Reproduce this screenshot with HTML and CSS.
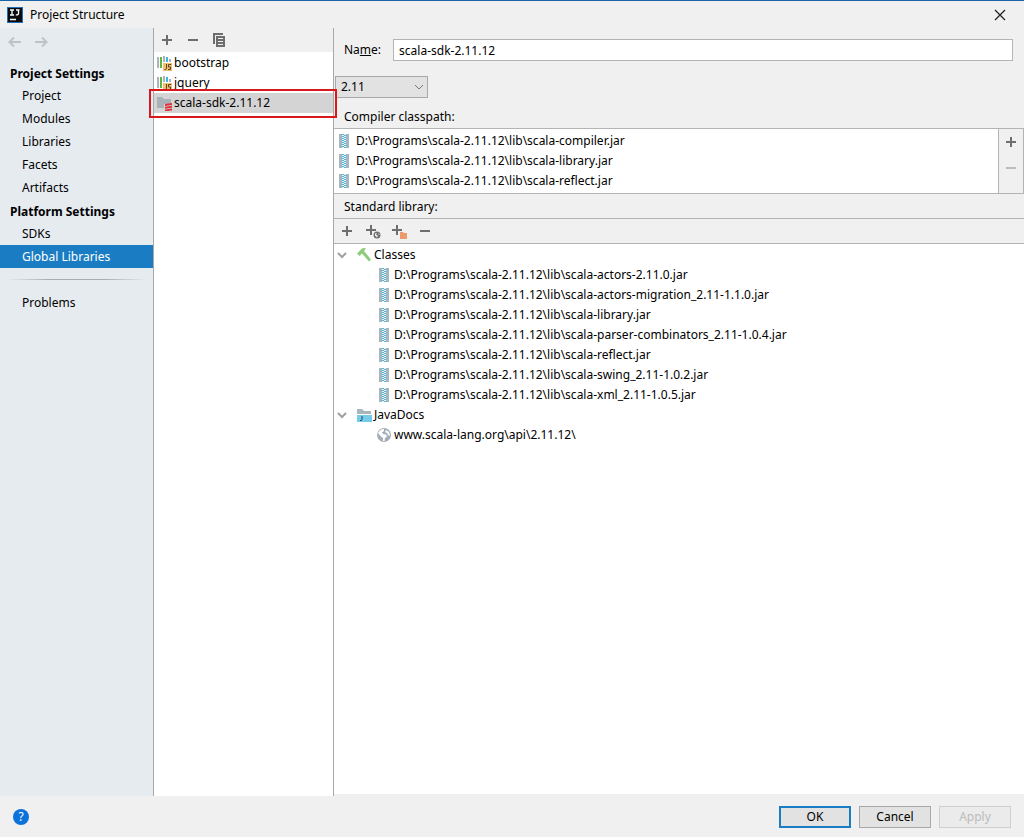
FILE: index.html
```html
<!DOCTYPE html>
<html lang="en">
<head>
    <meta charset="UTF-8">
    <meta name="viewport" content="width=device-width, initial-scale=1.0">
    <title>Project Structure</title>
    <link rel="stylesheet" href="styles.css">
</head>
<body>

    <!-- Shared icons -->
    <svg class="sprite" aria-hidden="true">
        <symbol id="plus" viewBox="0 0 16 16"><path d="M7 3h2v4h4v2H9v4H7V9H3V7h4z" fill="#6e6e6e"/></symbol>
        <symbol id="minus" viewBox="0 0 16 16"><path d="M3 7h10v2H3z" fill="currentColor"/></symbol>
        <symbol id="jar" viewBox="0 0 16 16">
            <path d="M3 1h3v14H3zM10 1h3v14h-3z" fill="#a9b5bd"/>
            <path d="M6 1h4v14H6z" fill="#e4f4fa"/>
            <path d="M6 1h2v1H6zM8 2h2v1H8zM6 3h2v1H6zM8 4h2v1H8zM6 5h2v1H6zM8 6h2v1H8zM6 7h2v1H6zM8 8h2v1H8zM6 9h2v1H6zM8 10h2v1H8zM6 11h2v1H6zM8 12h2v1H8zM6 13h2v1H6zM8 14h2v1H8z" fill="#52b5d6"/>
        </symbol>
        <symbol id="jslib" viewBox="0 0 16 16">
            <path d="M1 2h2v11H1zM7 1h2v6H7zM13 4h2v3h-2z" fill="#a9b5bd"/>
            <path d="M4 2h2v11H4z" fill="#62b543"/>
            <path d="M10 2h2v5h-2z" fill="#40b6e0"/>
            <path d="M7 8h9v8H7z" fill="#f0c070"/>
            <path d="M10.500 9v4.500q0 1-2 1M15 9.500h-2.500v2.500h2v2.500H12" fill="none" stroke="#5c4420"/>
        </symbol>
        <symbol id="scala" viewBox="0 0 16 16">
            <path d="M1 2h5l2 2h7v5H8v4H1z" fill="#a9b2b9"/>
            <path d="M9 9l7-1v2l-7 1zM9 11.700l7-1v2l-7 1zM9 14.400l7-1v2l-7 1z" fill="#e0343c"/>
        </symbol>
        <symbol id="chevron" viewBox="0 0 16 16"><path d="M4 6l4 4 4-4" fill="none" stroke="#a0a0a0" stroke-width="2"/></symbol>
        <symbol id="hammer" viewBox="0 0 16 16">
            <path d="M1 6.500L6 1.500q2-.8 4 0L8 4l7 8.500-2 2L6 6.500 3.500 9z" fill="#8fcb7c"/>
        </symbol>
        <symbol id="docs" viewBox="0 0 16 16">
            <path d="M1 2h5l2 2h7v3H1z" fill="#a9b5bd"/>
            <path d="M1 8h15v7H1z" fill="#74cbea"/>
            <path d="M6 9v3.500q0 1.300-2 1" fill="none" stroke="#234b5b"/>
        </symbol>
        <symbol id="globe" viewBox="0 0 16 16">
            <circle cx="8" cy="8" r="7" fill="#a3b0ba"/>
            <path d="M3 4.500l2-2 3-.5v2L6 5.500 7 7l3 .5 1 2-2 1.500-.5 3H7v-3L5 9.500 2 6zM10 3l3 2 1 4-2-1-1-2-2-1z" fill="#fff"/>
        </symbol>
    </svg>

    <header class="titlebar">
        <svg class="app-logo" viewBox="0 0 16 16" aria-hidden="true">
            <path d="M0 0h16v16H0z" fill="#246db0"/>
            <path d="M1 1h14v14H1z" fill="#0b0d12"/>
            <path d="M3 3h4M3 8h4M5 3v5M9 3h3.500M11.500 3v3.500q0 1.700-2.700 1.300M3 12.500h6" fill="none" stroke="#fff" stroke-width="1.300"/>
        </svg>
        <h1>Project Structure</h1>
        <button class="close" aria-label="Close">
            <svg viewBox="0 0 12 12"><path d="M1 1l10 10M11 1L1 11" stroke="#222" stroke-width="1.300"/></svg>
        </button>
    </header>

    <main class="content">
        <nav class="sidebar">
            <div class="history">
                <button aria-label="Back" disabled><svg viewBox="0 0 16 16"><path d="M14 8H2M7 3.500L2.500 8 7 12.500" fill="none" stroke="#c0c3c6" stroke-width="2"/></svg></button>
                <button aria-label="Forward" disabled><svg viewBox="0 0 16 16"><path d="M2 8h12M9 3.500L13.500 8 9 12.500" fill="none" stroke="#c0c3c6" stroke-width="2"/></svg></button>
            </div>
            <h2>Project Settings</h2>
            <a href="#">Project</a>
            <a href="#">Modules</a>
            <a href="#">Libraries</a>
            <a href="#">Facets</a>
            <a href="#">Artifacts</a>
            <h2>Platform Settings</h2>
            <a href="#">SDKs</a>
            <a href="#" class="active">Global Libraries</a>
            <hr>
            <a href="#">Problems</a>
        </nav>

        <section class="libraries">
            <div class="toolbar">
                <button aria-label="Add library"><svg class="icon"><use href="#plus"/></svg></button>
                <button aria-label="Remove library"><svg class="icon"><use href="#minus"/></svg></button>
                <button aria-label="Copy library"><svg class="icon" viewBox="0 0 16 16"><path d="M2 1h10v2H4v9H2z" fill="#6e6e6e"/><path d="M5 4h9v11H5zM7 6v1h5V6zM7 9v1h5V9zM7 12v1h5v-1z" fill="#6e6e6e" fill-rule="evenodd"/></svg></button>
            </div>
            <ul class="library-list">
                <li><svg class="icon"><use href="#jslib"/></svg>bootstrap</li>
                <li><svg class="icon"><use href="#jslib"/></svg>jquery</li>
                <li class="selected"><svg class="icon"><use href="#scala"/></svg>scala-sdk-2.11.12</li>
            </ul>
        </section>

        <section class="details">
            <div class="name-row">
                <label for="name">Na<u>m</u>e:</label>
                <input type="text" id="name" value="scala-sdk-2.11.12">
            </div>
            <div class="version">
                <select aria-label="Scala version"><option>2.11</option></select>
                <svg class="select-arrow" viewBox="0 0 10 10" aria-hidden="true"><path d="M1 3l4 4 4-4" fill="none" stroke="#777"/></svg>
            </div>

            <h3>Compiler classpath:</h3>
            <div class="classpath">
                <ul>
                    <li><svg class="icon"><use href="#jar"/></svg>D:\Programs\scala-2.11.12\lib\scala-compiler.jar</li>
                    <li><svg class="icon"><use href="#jar"/></svg>D:\Programs\scala-2.11.12\lib\scala-library.jar</li>
                    <li><svg class="icon"><use href="#jar"/></svg>D:\Programs\scala-2.11.12\lib\scala-reflect.jar</li>
                </ul>
                <div class="classpath-tools">
                    <button aria-label="Add to classpath"><svg class="icon"><use href="#plus"/></svg></button>
                    <button aria-label="Remove from classpath" disabled><svg class="icon"><use href="#minus"/></svg></button>
                </div>
            </div>

            <h3>Standard library:</h3>
            <div class="toolbar standard-tools">
                <button aria-label="Add"><svg class="icon"><use href="#plus"/></svg></button>
                <button aria-label="Add from URL"><svg class="icon" viewBox="0 0 16 16"><path d="M5 2h2v4h4v2H7v4H5V8H1V6h4z" fill="#6e6e6e"/><circle cx="12" cy="12" r="3.500" fill="#6e6e6e"/><path d="M10 10.500l2-.5-1 1.500 2 1.500-1 1.500-2-2zM13 10l1 2 1-.5z" fill="#f2f2f2"/></svg></button>
                <button aria-label="Add folder"><svg class="icon" viewBox="0 0 16 16"><path d="M5 2h2v4h4v2H7v4H5V8H1V6h4z" fill="#6e6e6e"/><path d="M8 9h3l1 1h4v6H8z" fill="#f2f2f2"/><path d="M9 9h3l1 1h3v6H9z" fill="#ec9a6c"/></svg></button>
                <button aria-label="Remove"><svg class="icon"><use href="#minus"/></svg></button>
            </div>
            <ul class="tree">
                <li>
                    <div class="branch"><svg class="icon"><use href="#chevron"/></svg><svg class="icon"><use href="#hammer"/></svg>Classes</div>
                    <ul>
                        <li><svg class="icon"><use href="#jar"/></svg>D:\Programs\scala-2.11.12\lib\scala-actors-2.11.0.jar</li>
                        <li><svg class="icon"><use href="#jar"/></svg>D:\Programs\scala-2.11.12\lib\scala-actors-migration_2.11-1.1.0.jar</li>
                        <li><svg class="icon"><use href="#jar"/></svg>D:\Programs\scala-2.11.12\lib\scala-library.jar</li>
                        <li><svg class="icon"><use href="#jar"/></svg>D:\Programs\scala-2.11.12\lib\scala-parser-combinators_2.11-1.0.4.jar</li>
                        <li><svg class="icon"><use href="#jar"/></svg>D:\Programs\scala-2.11.12\lib\scala-reflect.jar</li>
                        <li><svg class="icon"><use href="#jar"/></svg>D:\Programs\scala-2.11.12\lib\scala-swing_2.11-1.0.2.jar</li>
                        <li><svg class="icon"><use href="#jar"/></svg>D:\Programs\scala-2.11.12\lib\scala-xml_2.11-1.0.5.jar</li>
                    </ul>
                </li>
                <li>
                    <div class="branch"><svg class="icon"><use href="#chevron"/></svg><svg class="icon"><use href="#docs"/></svg>JavaDocs</div>
                    <ul>
                        <li><svg class="icon"><use href="#globe"/></svg>www.scala-lang.org\api\2.11.12\</li>
                    </ul>
                </li>
            </ul>
        </section>
    </main>

    <footer class="buttons">
        <button class="help" aria-label="Help">?</button>
        <button class="btn primary">OK</button>
        <button class="btn">Cancel</button>
        <button class="btn" disabled>Apply</button>
    </footer>

</body>
</html>
```
FILE: styles.css
```css
* {
    box-sizing: border-box;
}

body {
    display: flex;
    flex-direction: column;
    min-height: 100vh;
    margin: 0;
    border-top: 1px solid #1a64a8;
    background-color: #f0f0f0;
    color: #000;
    font-family: "Noto Sans", "Open Sans", sans-serif;
    font-size: 12px;
    line-height: 20px;
}

h1, h2, h3, ul {
    margin: 0;
    padding: 0;
    font-size: 12px;
    font-weight: normal;
    list-style: none;
}

button, input, select {
    font: inherit;
    color: inherit;
}

button {
    padding: 0;
    border: none;
    background: none;
}

.sprite {
    display: none;
}

.icon {
    flex: none;
    display: block;
    width: 16px;
    height: 16px;
    color: #6e6e6e;
}

/* Title bar */
.titlebar {
    display: flex;
    align-items: center;
    gap: 7px;
    height: 27px;
    padding: 0 18px 0 7px;
}

.app-logo {
    width: 16px;
    height: 16px;
}

.close {
    width: 12px;
    height: 12px;
    margin-left: auto;
}

.close svg {
    display: block;
}

/* Main area */
.content {
    flex: 1;
    display: grid;
    grid-template-columns: 154px 180px 1fr;
}

.sidebar {
    border-right: 1px solid #a8a8a8;
    background-color: #e6ebf0;
    line-height: 23px;
}

.history {
    display: flex;
    gap: 10px;
    height: 33px;
    padding: 6px 7px;
}

.history button,
.history svg {
    display: block;
    width: 16px;
    height: 16px;
}

.sidebar h2 {
    height: 23px;
    padding: 1px 0 0 10px;
    font-weight: bold;
}

.sidebar a {
    display: block;
    padding-left: 22px;
    color: inherit;
    text-decoration: none;
}

.sidebar a.active {
    background-color: #1a7dc4;
    color: #fff;
}

.sidebar hr {
    height: 1px;
    margin: 11px 7px;
    border: none;
    background: linear-gradient(to right, transparent, #a9adb1 30%, #a9adb1 70%, transparent);
}

.toolbar {
    display: flex;
    align-items: center;
    gap: 10px;
    height: 24px;
    padding-left: 5px;
}

/* Library list */
.libraries {
    display: flex;
    flex-direction: column;
    border-right: 1px solid #a8a8a8;
}

.library-list {
    flex: 1;
    padding-top: 1px;
    background-color: #fff;
}

.library-list li {
    display: flex;
    align-items: center;
    gap: 2px;
    padding-left: 2px;
}

.library-list .selected {
    position: relative;
    background-color: #d4d4d4;
}

/* Red frame around the selected library */
.library-list .selected::after {
    content: "";
    position: absolute;
    z-index: 1;
    inset: -4px -4px -5px -5px;
    border: 2px solid #d8181c;
}

/* Library details */
.details {
    display: flex;
    flex-direction: column;
    min-width: 0;
}

.name-row {
    display: flex;
    align-items: center;
    gap: 12px;
    padding: 11px 11px 15px 10px;
}

.name-row input {
    flex: 1;
    height: 22px;
    padding: 0 5px;
    border: 1px solid #b4b4b4;
    background-color: #fff;
}

.version {
    position: relative;
    width: 94px;
    margin-bottom: 9px;
    padding-left: 1px;
}

.version select {
    display: block;
    appearance: none;
    width: 100%;
    height: 22px;
    padding: 0 5px;
    border: 1px solid #a8a8a8;
    border-radius: 0;
    background-color: #e2e2e2;
}

.select-arrow {
    position: absolute;
    top: 6px;
    right: 4px;
    width: 10px;
    height: 10px;
}

.details h3 {
    padding-left: 10px;
}

.classpath {
    display: flex;
    margin: 1px 0 3px;
    border: 1px solid #b4b4b4;
    border-left: none;
}

.classpath ul {
    flex: 1;
    padding: 2px 0;
    background-color: #fff;
}

.classpath li {
    display: flex;
    align-items: center;
    gap: 4px;
    padding-left: 2px;
}

.classpath-tools {
    display: flex;
    flex-direction: column;
    gap: 10px;
    padding: 5px 4px;
    border-left: 1px solid #b4b4b4;
}

button:disabled .icon {
    color: #bdbdbd;
}

.standard-tools {
    height: 26px;
    margin-top: 1px;
    border-top: 1px solid #b4b4b4;
    border-bottom: 1px solid #b4b4b4;
}

.tree {
    flex: 1;
    margin-bottom: 2px;
    padding-top: 1px;
    background-color: #fff;
}

.branch {
    display: flex;
    align-items: center;
    gap: 2px;
}

.branch .icon:first-child {
    margin-right: 4px;
}

.tree ul li {
    display: flex;
    align-items: center;
    gap: 2px;
    padding-left: 42px;
}

/* Footer buttons */
.buttons {
    display: flex;
    align-items: center;
    gap: 8px;
    height: 41px;
    padding: 0 13px;
}

.help {
    width: 16px;
    height: 16px;
    margin-right: auto;
    border-radius: 50%;
    background-color: #0a72d8;
    color: #fff;
    line-height: 16px;
}

.btn {
    width: 72px;
    height: 22px;
    border: 1px solid #a8a8a8;
    background-color: #e2e2e2;
    line-height: 18px;
}

.btn.primary {
    border: 2px solid #1a7dc4;
}

.btn:disabled {
    border-color: #cfcfcf;
    background-color: #ebebeb;
    color: #bcbcbc;
}
```
